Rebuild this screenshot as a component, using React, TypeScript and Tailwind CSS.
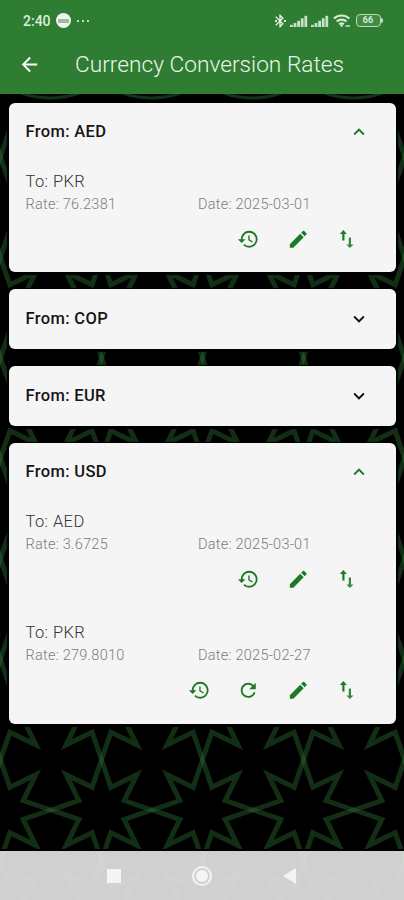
import { MdArrowBack, MdBluetooth, MdEdit, MdHistory, MdKeyboardArrowDown, MdKeyboardArrowUp, MdRefresh } from "react-icons/md";

type Rate = { to: string; rate: string; date: string; refreshable?: boolean };
type Group = { from: string; open: boolean; rates: Rate[] };

const GROUPS: Group[] = [
  { from: "AED", open: true, rates: [{ to: "PKR", rate: "76.2381", date: "2025-03-01" }] },
  { from: "COP", open: false, rates: [] },
  { from: "EUR", open: false, rates: [] },
  {
    from: "USD",
    open: true,
    rates: [
      { to: "AED", rate: "3.6725", date: "2025-03-01" },
      { to: "PKR", rate: "279.8010", date: "2025-02-27", refreshable: true }
    ]
  }
];

const STAR = Array.from({ length: 16 }, (_, i) => {
  const r = i % 2 ? 24.5 : 50;
  const a = (i * Math.PI) / 8;
  return `${(r * Math.cos(a)).toFixed(2)},${(r * Math.sin(a)).toFixed(2)}`;
}).join(" ");

const COLS = [0, 1, 2, 3, 4];
const ROWS = [0, 1, 2, 3, 4, 5, 6, 7, 8];

function StarBackdrop() {
  return (
    <svg className="absolute inset-0" width="404" height="900" viewBox="0 0 404 900" fill="none">
      {ROWS.map((row) =>
        COLS.map((col) => (
          <polygon
            key={`${row}-${col}`}
            points={STAR}
            transform={`translate(${col * 101 + 0.5} ${106.5 + row * 100.5})`}
            stroke="#2f7a38"
            strokeOpacity="0.38"
            strokeWidth="5"
            strokeMiterlimit="10"
          />
        ))
      )}
      {/* star tips fading out under the header */}
      <rect width="404" height="104" fill="#000" />
      {[50.5, 151.5, 252.5, 353.5].map((x) => (
        <path key={x} d={`M${x - 29} 93Q${x} 103 ${x + 29} 93`} stroke="#12301a" strokeWidth="3" />
      ))}
      <rect y="849" width="404" height="2" fill="#000" />
    </svg>
  );
}

function Signal() {
  return (
    <svg width="18" height="12" viewBox="0 0 18 12" fill="#c6e2c6">
      <rect x="0" y="9.8" width="2.8" height="2.2" />
      <rect x="3.6" y="8" width="2.8" height="4" />
      <rect x="7.2" y="5.8" width="2.8" height="6.2" />
      <rect x="10.8" y="3.3" width="2.8" height="8.7" />
      <rect x="14.4" y="0.8" width="2.8" height="11.2" />
    </svg>
  );
}

function Wifi() {
  return (
    <svg width="18" height="14" viewBox="0 0 18 14" fill="none" stroke="#d3ead3" strokeWidth="2.1">
      <path d="M0.8 4.6a11.4 11.4 0 0 1 15.6 0" />
      <path d="M3.6 7.6a7.3 7.3 0 0 1 10 0" />
      <path d="M6.2 10.3a3.8 3.8 0 0 1 4.8 0" />
      <path d="M8.6 12.8l-1.2-1.6h2.4z" fill="#d3ead3" strokeWidth="1" />
      <path d="M12.5 12h4.5" strokeWidth="2" strokeOpacity="0.7" />
    </svg>
  );
}

function Battery() {
  return (
    <div className="ml-[1.5px] flex items-center">
      <div className="flex h-[13px] w-[25px] items-center justify-center rounded-[4px] border-[1.5px] border-[#b9dab9] bg-[#438a46] text-[9px] font-bold text-[#d9edd9]">66</div>
      <div className="h-[5px] w-[2px] rounded-r-sm bg-[#c4dfc4]" />
    </div>
  );
}

function StatusBar() {
  return (
    <div className="flex h-[40px] items-center justify-between pr-[21.5px] pl-[23px] pt-[1px]">
      <div className="flex items-center">
        <span className="w-[33px] pt-px text-[14px] font-medium text-[#dcefdc]">2:40</span>
        <span className="flex h-[15px] w-[15px] items-center justify-center rounded-full bg-[#eef7ee]">
          <span className="h-[4px] w-[11px] bg-[#9fbca0]" />
        </span>
        <span className="ml-[6px] flex gap-[3px]">
          <i className="h-[2px] w-[2px] bg-[#c4dfc4]" />
          <i className="h-[2px] w-[2px] bg-[#c4dfc4]" />
          <i className="h-[2px] w-[2px] bg-[#c4dfc4]" />
        </span>
      </div>
      <div className="flex items-center gap-[3.5px]">
        <span className="flex items-center">
          <i className="mr-[-5px] h-[2px] w-[2px] bg-[#dcefdc]" />
          <MdBluetooth className="h-[16px] w-[16px] text-[#e6f5e6]" />
          <i className="ml-[-4px] h-[2px] w-[2px] bg-[#dcefdc]" />
        </span>
        <Signal />
        <Signal />
        <Wifi />
        <Battery />
      </div>
    </div>
  );
}

// up/down arrows, the down one slightly lighter and lower
function SwapIcon() {
  return (
    <svg width="20" height="22" viewBox="0 0 20 22">
      <path d="M7.3 2L3.9 6h2.4v6.5h2.2V6h2.4z" fill="#1b7a22" />
      <path d="M13.9 20l-3.5-3.6h2.4V9.5h2.2v6.9h2.5z" fill="#37893c" />
    </svg>
  );
}

function RateRow({ item }: { item: Rate }) {
  return (
    <div className="h-[111.5px] last:h-[102.5px]">
      <div className="h-[24px] text-[16.5px] leading-[23px] font-light tracking-[0.4px] text-[#333]">To: {item.to}</div>
      <div className="flex h-[22px] text-[14.5px] leading-[22px] font-light tracking-[0.25px] text-[#7c7c7c]">
        <span className="w-[172.5px]">Rate: {item.rate}</span>
        <span>Date: {item.date}</span>
      </div>
      <div className="mt-[12px] flex justify-end gap-[27px] pr-[22.5px] text-[#1b7a22]">
        <MdHistory className="h-[22.5px] w-[22.5px]" />
        {item.refreshable && <MdRefresh className="h-[22.5px] w-[22.5px]" />}
        <MdEdit className="h-[22.5px] w-[22.5px]" />
        <SwapIcon />
      </div>
    </div>
  );
}

function GroupCard({ group }: { group: Group }) {
  const Chevron = group.open ? MdKeyboardArrowUp : MdKeyboardArrowDown;
  return (
    <section className="rounded-[6px] bg-[#f5f5f5] pr-[17px] pl-[17px] shadow-[0_1px_1px_2px_#000]">
      <div className={group.open ? "flex h-[60px] items-center justify-between pr-[9px] pb-[2px]" : "flex h-[60.5px] items-center justify-between pr-[9px]"}>
        <h2 className="pt-[2px] text-[16.5px] font-medium tracking-[0.35px] text-[#151515]">From: {group.from}</h2>
        <Chevron className={group.open ? "h-[22px] w-[22px] text-[#1b7a22]" : "h-[22px] w-[22px] text-[#111]"} />
      </div>
      {group.open && (
        <div className="pt-[7px]">
          {group.rates.map((item) => (
            <RateRow key={item.to} item={item} />
          ))}
        </div>
      )}
    </section>
  );
}

export default function App() {
  return (
    <div className="relative h-[900px] w-[404px] overflow-hidden bg-black font-['Roboto',sans-serif]">
      <StarBackdrop />
      <div className="relative flex h-full flex-col">
        <header className="h-[93.5px] bg-[#2e7d32]">
          <StatusBar />
          <div className="flex h-[49px] items-center pl-[18px]">
            <MdArrowBack className="h-[23px] w-[23px] text-white" />
            <h1 className="ml-[34px] pt-px text-[22.7px] font-light text-[#eaf5ea]">Currency Conversion Rates</h1>
          </div>
        </header>
        <main className="flex flex-1 flex-col gap-[16.5px] px-[8.5px] pt-[9px]">
          {GROUPS.map((g) => (
            <GroupCard key={g.from} group={g} />
          ))}
        </main>
        <nav className="flex h-[49px] items-center bg-[#e2e2e2]/92 pl-[107px]">
          <div className="h-[14px] w-[14px] bg-[#f4f4f4]" />
          <div className="ml-[71px] flex h-[20px] w-[20px] items-center justify-center rounded-full border-2 border-[#f4f4f4]">
            <div className="h-[12px] w-[12px] rounded-full bg-[#f4f4f4]" />
          </div>
          <svg className="ml-[71px]" width="14" height="16" viewBox="0 0 14 16">
            <path d="M0 8L13 0v16z" fill="#f4f4f4" />
          </svg>
        </nav>
      </div>
    </div>
  );
}
